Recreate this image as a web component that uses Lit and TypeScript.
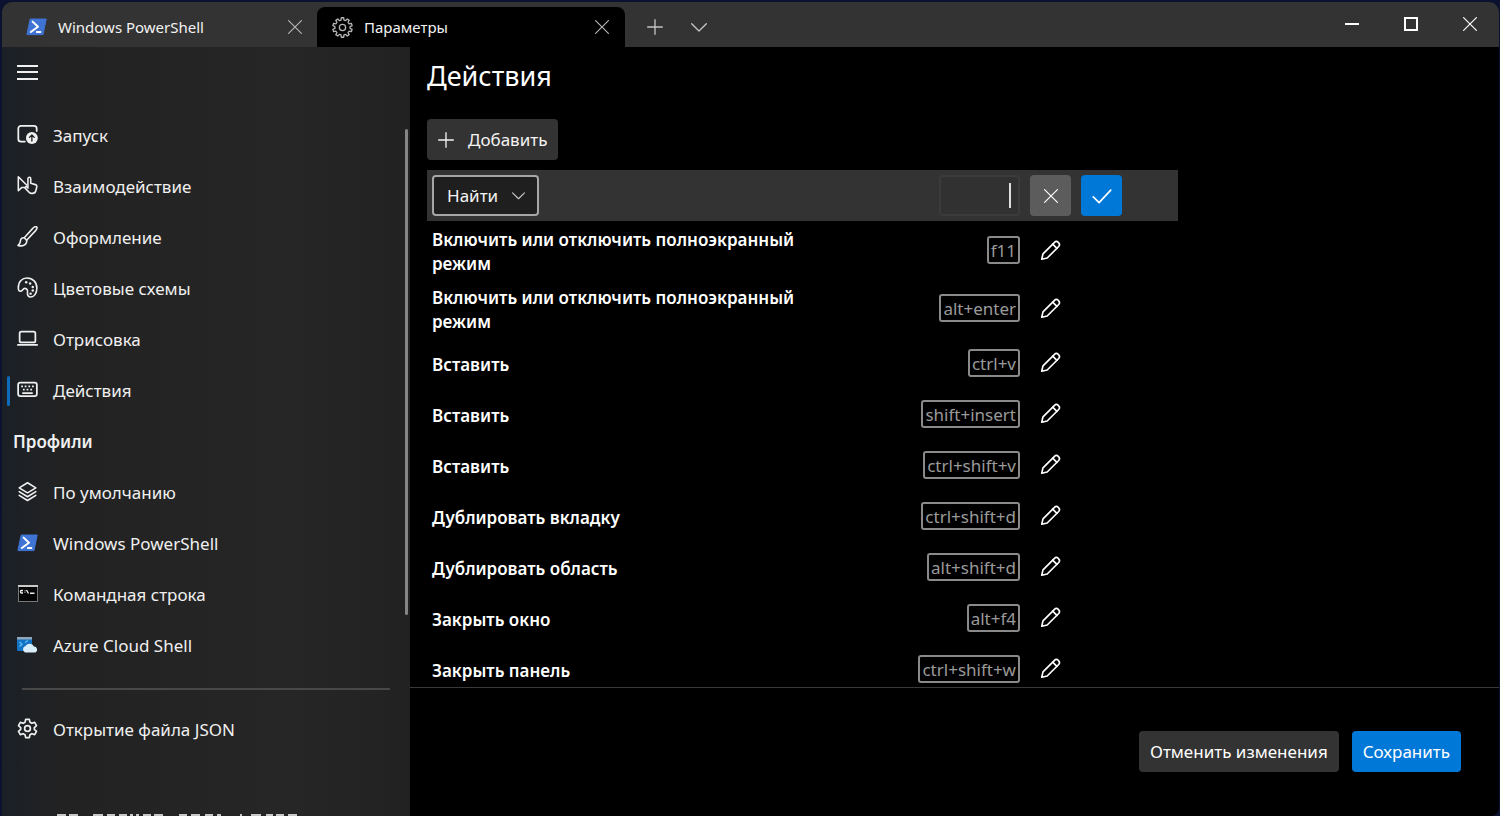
import { LitElement, html, svg, css } from "lit";
import { customElement, property } from "lit/decorators.js";
import { classMap } from "lit/directives/class-map.js";

const line = (body: unknown, size = 21, width = 2) => html`<svg
  width=${size} height=${size} viewBox="0 0 24 24" fill="none" stroke="currentColor"
  stroke-width=${width} stroke-linejoin="round" stroke-linecap="round" aria-hidden="true">${body}</svg>`;

const gearPath = (teeth: number, outer: number, inner: number) => {
  const points: string[] = [];
  const step = (Math.PI * 2) / teeth;
  for (let i = 0; i < teeth; i++) {
    const a = i * step - Math.PI / 2;
    for (const [f, r] of [[-0.3, inner], [-0.2, outer], [0.2, outer], [0.3, inner]]) {
      points.push(`${(12 + r * Math.cos(a + f * step)).toFixed(2)} ${(12 + r * Math.sin(a + f * step)).toFixed(2)}`);
    }
  }
  return `M${points.join("L")}Z`;
};

const powershell = html`<svg width="21" height="18" viewBox="0 0 21 18" aria-hidden="true">
  <path d="M4.2 1H20.2L17 16.6H.9Z" fill="#3f74d4" stroke="#3f74d4" stroke-linejoin="round"/>
  <path d="M6.6 3.6L12 8.8L4.8 14" fill="none" stroke="#fff" stroke-width="2" stroke-linecap="round" stroke-linejoin="round"/>
  <path d="M10.8 14H14.4" stroke="#fff" stroke-width="1.8" stroke-linecap="round"/></svg>`;

const icons: Record<string, unknown> = {
  startup: line(svg`<path d="M9 20H4.500A3 3 0 0 1 1.500 17V5A3 3 0 0 1 4.500 2H19.500A3 3 0 0 1 22.500 5V8"/>
    <circle cx="17" cy="16" r="6.800" fill="currentColor" stroke="none"/>
    <path d="M17 19.500V13M14.300 15.300L17 12.600L19.700 15.300" stroke="#202020" stroke-width="1.500"/>`),
  interaction: line(svg`<path d="M1.500 2V18L5.500 14.200H8.500M1.500 2L11 11.500"/>
    <path d="M12.500 15V4.200A1.600 1.600 0 0 1 15.700 4.200V9.500L21 11A2.300 2.300 0 0 1 22.700 13.500L21.500 18A4 4 0 0 1 17.500 21H16.500A4 4 0 0 1 13.500 19.500L9.300 15A1.300 1.300 0 0 1 11 13.400L12.500 14.500"/>`, 21, 1.8),
  appearance: line(svg`<path d="M22.700 1.300C21 -.2 19 1.500 18 2.700L8.300 13.500L11 16.300L21.500 5C22.700 3.500 23.300 2.200 22.700 1.300Z"/>
    <path d="M8.300 13.500C5.500 13.300 4 15 3.800 17.500C3.600 19.500 2.800 21 1.200 22.200C4 23 7.500 22.800 9.500 21C11 19.700 11.300 17.800 11 16.300"/>`, 21, 1.8),
  colors: line(svg`<path d="M1.500 12.500C1.500 5 6 1.200 11.500 1.200C18 1.200 22.700 6 22.700 12.500C22.700 18.500 19.800 22.800 15.800 22.800C12.800 22.800 11.600 20.600 12 18C12.400 15.300 11.500 13 9 13C6.500 13 6.200 16.300 4 16.300C2.300 16.300 1.500 14.800 1.500 12.500Z"/>
    <g fill="currentColor" stroke="none"><circle cx="10.500" cy="6" r="1.400"/><circle cx="15" cy="7.500" r="1.400"/><circle cx="18" cy="11.500" r="1.400"/><circle cx="18" cy="15.500" r="1.400"/><circle cx="15.500" cy="19" r="1.400"/></g>`, 21, 1.8),
  rendering: line(svg`<rect x="3" y="4" width="18" height="12.500" rx="2"/><path d="M1 19.300H23"/>`),
  actions: line(svg`<rect x="1.300" y="4" width="21.400" height="15.500" rx="2.500"/>
    <path d="M4.800 8.500H6.800M8.800 8.500H10.800M13 8.500H15M17.200 8.500H19.200M6.800 12H8.800M11 12H13M15.200 12H17.200M6 16H18" stroke-linecap="butt"/>`),
  layers: line(svg`<path d="M12 2L21.500 7.800L12 13.500L2.500 7.800Z"/><path d="M2.500 12.200L12 18L21.500 12.200M2.500 16.500L12 22.300L21.500 16.500"/>`, 21, 1.8),
  powershell,
  cmd: html`<svg width="20" height="17" viewBox="0 0 20 17" aria-hidden="true">
    <rect x=".5" y=".5" width="19" height="16" fill="#050505" stroke="#777"/><path d="M0 1H20" stroke="#c9c9c9" stroke-width="2"/>
    <path d="M5 5.500H3.500Q2.500 5.500 2.500 6.700T3.500 8H5M7 5.500V6.200M7 7.500V8M8.500 5L10.500 8.500M12 8.300H16.500" fill="none" stroke="#eee" stroke-width="1.400"/></svg>`,
  azure: html`<svg width="21" height="18" viewBox="0 0 21 18" aria-hidden="true">
    <rect x="0" y="1" width="15" height="14" rx="1" fill="#1272c4"/><path d="M0 1H15V3.500H0Z" fill="#8fa7ba"/>
    <path d="M2.500 6L5 8.300L2.500 10.500M8 6.500L11 4.500" fill="none" stroke="#5bbcf0" stroke-width="1.400"/>
    <path d="M8 16.500A3.500 3.500 0 0 1 8.500 10A4.800 4.800 0 0 1 17 10.500A3.200 3.200 0 0 1 18.500 16.500Z" fill="#d9eefb"/></svg>`,
  settings: line(svg`<path d="M9.900 1.500H14.100L14.800 4.800L17 6.100L20.200 5L22.300 8.700L19.800 11V13L22.300 15.300L20.200 19L17 17.900L14.800 19.200L14.100 22.500H9.900L9.200 19.200L7 17.900L3.800 19L1.700 15.300L4.200 13V11L1.700 8.700L3.800 5L7 6.100L9.200 4.800Z"/><circle cx="12" cy="12" r="3.300"/>`, 21, 1.9),
  gear: line(svg`<path d=${gearPath(10, 11.2, 8.7)}/><circle cx="12" cy="12" r="3.600"/>`, 21, 1.5),
  close: line(svg`<path d="M1 1L23 23M23 1L1 23"/>`, 14, 2),
  plus: line(svg`<path d="M12 1V23M1 12H23"/>`, 16, 2),
  chevron: line(svg`<path d="M1 7L12 18L23 7"/>`, 16, 2),
  check: line(svg`<path d="M1.500 13L8.500 20L22.500 5"/>`, 20, 2),
  pencil: line(svg`<path d="M2 22L3.400 15.800L16.300 2.900A3.300 3.300 0 0 1 21.100 7.700L8.200 20.600Z"/><path d="M14.500 4.700L19.300 9.500"/>`, 21, 1.900),
  menu: html`<svg width="21" height="16" viewBox="0 0 21 16" stroke="currentColor" stroke-width="2" aria-hidden="true"><path d="M0 1H21M0 7H21M0 14H21"/></svg>`,
  minimize: html`<svg width="14" height="14" viewBox="0 0 14 14" stroke="currentColor" stroke-width="2" aria-hidden="true"><path d="M0 7H14"/></svg>`,
  maximize: html`<svg width="14" height="14" viewBox="0 0 14 14" stroke="currentColor" stroke-width="2" fill="none" aria-hidden="true"><rect x="1" y="1" width="12" height="12"/></svg>`,
};

const reset = css`
  :host, * { box-sizing: border-box; }
  svg { display: block; flex: none; }
  button, input, select { font: inherit; color: inherit; margin: 0; border: 0; padding: 0; background: none; }
  button { display: flex; align-items: center; justify-content: center; }
`;

@customElement("title-bar")
export class TitleBar extends LitElement {
  static styles = [reset, css`
    :host { display: flex; height: 45px; background: #333; font-size: 15px; border-radius: 10px 10px 0 0; }
    .tab { display: flex; align-items: center; width: 308px; padding: 0 15px; }
    .tab.first { width: 315px; padding: 5px 14px 0 24px; }
    .tab.current { background: #000; margin-top: 5px; border-radius: 8px 8px 0 0; }
    .icon { display: grid; place-items: center; width: 21px; color: #b5b5b5; }
    .label { flex: 1; margin-left: 11px; color: #f2f2f2; text-align: left; }
    .small { color: #b5b5b5; width: 16px; height: 32px; }
    .extra { display: flex; gap: 28px; align-items: center; padding: 4px 0 0 22px; color: #c4c4c4; }
    .window { display: flex; margin-left: auto; align-items: flex-start; color: #fff; }
    .window button { width: 59px; height: 44px; }
  `];
  render() {
    return html`
      <div class="tab first"><span class="icon">${icons.powershell}</span><span class="label">Windows PowerShell</span>
        <button class="small" aria-label="Закрыть">${icons.close}</button></div>
      <div class="tab current"><span class="icon">${icons.gear}</span><span class="label">Параметры</span>
        <button class="small" aria-label="Закрыть">${icons.close}</button></div>
      <div class="extra"><button aria-label="Новая вкладка">${icons.plus}</button><button aria-label="Меню">${icons.chevron}</button></div>
      <div class="window"><button aria-label="Свернуть">${icons.minimize}</button><button aria-label="Развернуть">${icons.maximize}</button>
        <button aria-label="Закрыть окно">${icons.close}</button></div>`;
  }
}

@customElement("side-nav")
export class SideNav extends LitElement {
  static styles = [reset, css`
    :host { display: flex; flex-direction: column; background: linear-gradient(90deg, #1b2026, #222 60px, #262626 70%, #222); color: #f0f0f0; min-height: 0; }
    .menu { width: 51px; height: 51px; margin-bottom: 12px; flex: none; }
    .scroller { display: flex; justify-content: space-between; }
    .thumb { width: 3px; height: 486px; margin: 19px 2px 0 0; border-radius: 2px; background: #858585; }
    .list { flex: 1; }
    a { display: flex; align-items: center; height: 51px; color: inherit; text-decoration: none; }
    .mark { width: 3px; height: 30px; margin-left: 5px; border-radius: 2px; }
    .current .mark { background: #0f6cbd; }
    .icon { display: grid; place-items: center; width: 21px; margin: 0 15px 2px 7px; }
    h2 { margin: 0; padding-left: 11px; font-size: 17px; line-height: 51px; font-weight: 600; }
    hr { width: auto; margin: 17px 20px 14px; border: 0; height: 2px; background: #484848; flex: none; }
    .behind { margin-top: auto; }
  `];
  item(icon: string, label: string, current = false) {
    return html`<a href="#" class=${classMap({ current })} aria-current=${current ? "page" : "false"}>
      <span class="mark"></span><span class="icon">${icons[icon]}</span><span>${label}</span></a>`;
  }
  render() {
    return html`
      <button class="menu" aria-label="Навигация">${icons.menu}</button>
      <div class="scroller"><nav class="list">
        ${this.item("startup", "Запуск")}
        ${this.item("interaction", "Взаимодействие")}
        ${this.item("appearance", "Оформление")}
        ${this.item("colors", "Цветовые схемы")}
        ${this.item("rendering", "Отрисовка")}
        ${this.item("actions", "Действия", true)}
        <h2>Профили</h2>
        ${this.item("layers", "По умолчанию")}
        ${this.item("powershell", "Windows PowerShell")}
        ${this.item("cmd", "Командная строка")}
        ${this.item("azure", "Azure Cloud Shell")}
      </nav><div class="thumb"></div></div>
      <hr />
      ${this.item("settings", "Открытие файла JSON")}
      <svg class="behind" width="300" height="2" viewBox="0 0 300 2" stroke="#c8c8c8" stroke-width="2" aria-hidden="true">
        <path d="M55 1h9M67 1h9M91 1h10M105 1h8M117 1h8M128 1h3M134 1h3M141 1h8M152 1h9M177 1h8M189 1h9M203 1h8M215 1h4M238 1h2M249 1h10M264 1h7M274 1h8M286 1h9"/></svg>`;
  }
}

@customElement("action-row")
export class ActionRow extends LitElement {
  @property() name = "";
  @property() keys = "";
  static styles = [reset, css`
    :host { display: grid; grid-template-columns: 380px 1fr 41px; column-gap: 10px; align-items: center; min-height: 51px; padding: 5px 107px 5px 5px; }
    .name { font-weight: 600; line-height: 24px; color: #fff; padding-top: 2px; margin-bottom: -2px; }
    kbd { justify-self: end; border: 2px solid #8a8a8a; border-radius: 3px; height: 28px; padding: 0 2px; font: inherit; line-height: 26px; color: #9a9a9a; }
    button { width: 41px; height: 41px; color: #fff; }
  `];
  render() {
    return html`<span class="name">${this.name}</span><kbd>${this.keys}</kbd>
      <button aria-label="Изменить">${icons.pencil}</button>`;
  }
}

const actions = [
  ["Включить или отключить полноэкранный режим", "f11"],
  ["Включить или отключить полноэкранный режим", "alt+enter"],
  ["Вставить", "ctrl+v"],
  ["Вставить", "shift+insert"],
  ["Вставить", "ctrl+shift+v"],
  ["Дублировать вкладку", "ctrl+shift+d"],
  ["Дублировать область", "alt+shift+d"],
  ["Закрыть окно", "alt+f4"],
  ["Закрыть панель", "ctrl+shift+w"],
];

@customElement("app-root")
export class AppRoot extends LitElement {
  static styles = [reset, css`
    :host { display: flex; flex-direction: column; height: 100vh; padding: 2px 1px 0 2px; background: #0b1230; color: #fff; font: 17px/24px "Noto Sans", "Open Sans", sans-serif; overflow: hidden; }
    title-bar { flex: none; }
    .body { flex: 1; display: grid; grid-template-columns: 408px 1fr; min-height: 0; }
    main { display: flex; flex-direction: column; background: #000; min-height: 0; min-width: 0; border-radius: 0 0 8px 0; }
    .page { flex: 1; min-height: 0; overflow: hidden; padding-left: 17px; }
    h1 { margin: 9px 0 23px; font-size: 27px; line-height: 40px; font-weight: 400; }
    .add { height: 41px; gap: 14px; padding: 0 11px; background: #333; border-radius: 4px; color: #f4f4f4; }
    .list { max-width: 751px; margin-top: 10px; }
    .editor { display: flex; align-items: center; gap: 10px; height: 51px; padding: 5px 56px 5px 5px; background: #333; }
    .pick, .chord { display: grid; align-items: center; }
    .pick { margin-right: auto; width: 107px; }
    .pick > *, .chord > * { grid-area: 1 / 1; }
    select { appearance: none; height: 41px; width: 100%; padding: 0 13px; background: #1f1f1f; border: 2px solid #a6a6a6; border-radius: 4px; color: #f4f4f4; }
    .arrow { justify-self: end; margin-right: 14px; pointer-events: none; color: #ccc; }
    .arrow svg { width: 13px; height: 13px; }
    .chord input { width: 81px; height: 41px; border: 2px solid #3b3b3b; border-radius: 4px; background: #313131; text-align: right; padding: 0 8px; }
    .caret { justify-self: end; width: 2px; height: 25px; margin-right: 9px; background: #ddd; }
    .square { width: 41px; height: 41px; border-radius: 4px; background: #5c5c5c; }
    .primary { background: #0078d7; }
    footer { display: flex; justify-content: flex-end; gap: 13px; height: 129px; flex: none; padding: 43px 38px 0 0; border-top: 1px solid #3a3a3a; }
    footer button { height: 41px; padding: 0 11px; border-radius: 4px; }
    .cancel { background: #333; }
  `];
  render() {
    return html`
      <title-bar></title-bar>
      <div class="body">
        <side-nav></side-nav>
        <main>
          <div class="page">
            <h1>Действия</h1>
            <button class="add">${icons.plus}<span>Добавить</span></button>
            <div class="list">
              <div class="editor">
                <div class="pick"><select aria-label="Действие"><option>Найти</option></select><span class="arrow">${icons.chevron}</span></div>
                <div class="chord"><input type="text" aria-label="Сочетание клавиш" /><span class="caret"></span></div>
                <button class="square" aria-label="Отмена">${icons.close}</button>
                <button class="square primary" aria-label="Принять">${icons.check}</button>
              </div>
              ${actions.map(([name, keys]) => html`<action-row name=${name} keys=${keys}></action-row>`)}
            </div>
          </div>
          <footer><button class="cancel">Отменить изменения</button><button class="primary">Сохранить</button></footer>
        </main>
      </div>`;
  }
}
